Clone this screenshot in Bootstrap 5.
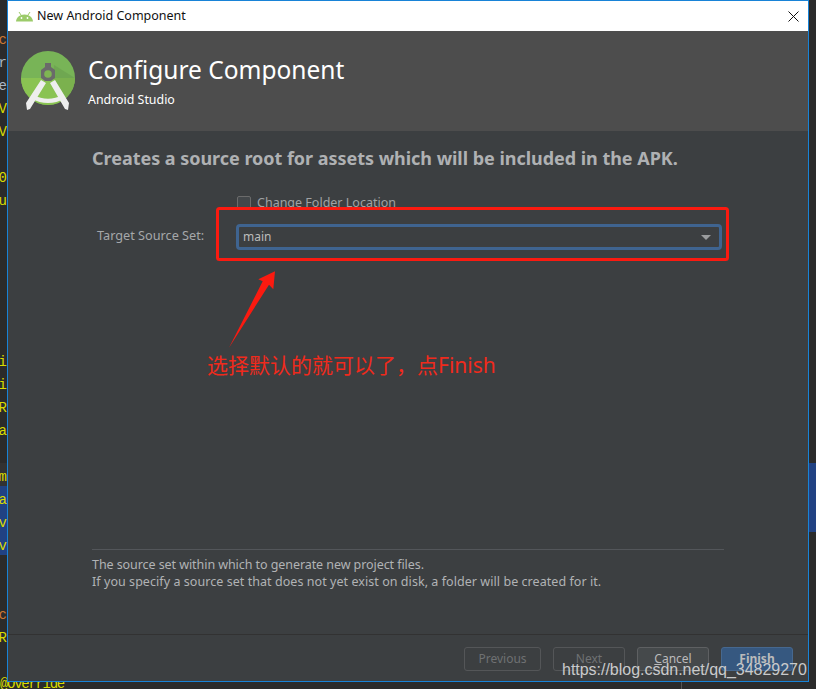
<!DOCTYPE html>
<html lang="en">
<head>
<meta charset="utf-8">
<title>New Android Component</title>
<link href="https://cdn.jsdelivr.net/npm/bootstrap@5.3.0/dist/css/bootstrap.min.css" rel="stylesheet">
<style>
html,body{margin:0;height:689px;overflow:hidden;background:#2b2b2b;font-family:"Noto Sans","Open Sans",sans-serif}
.stage{position:relative;width:816px;height:689px;overflow:hidden}
.code-gutter{position:absolute;left:0;top:26px;width:7px;overflow:hidden;font:14px/29px "Liberation Mono",monospace;color:#d8dc00}
.code-line{height:23px;overflow:hidden;white-space:pre;text-align:right;direction:rtl}
.code-line.kw{color:#cc7832}
.code-line.pl{color:#a9b7c6}
.sel-band{background:#214283}
.cur-band{background:#323232}
.override{position:absolute;left:0;top:675px;font:14px/18px "Liberation Mono",monospace;letter-spacing:-1.3px;color:#d8dc00}
.right-band{position:absolute;left:809px;top:463px;width:7px;height:69px;background:#214283}
.tick{position:absolute;left:681px;top:682px;width:1px;height:7px;background:#555}
.win{position:absolute;left:7px;top:0;width:802px;height:682px;border:1px solid #1883d7;display:flex;flex-direction:column;background:#3c3f41}
.titlebar{height:30px;background:#fff;color:#111;font-size:12.5px;padding-left:8px;gap:4px;flex:none}
.close-x{margin-left:auto;margin-right:9px;display:block}
.hdr{height:100px;background:#4d4d4d;flex:none;padding:21px 0 0 13px;gap:13px;color:#fff}
.hdr-logo{flex:none;margin-top:-1px}
.hdr-title{font-size:24.5px;line-height:36px}
.hdr-sub{font-size:12.4px;line-height:18px;margin-top:3px}
.pane{flex:1;display:flex;flex-direction:column;padding:15px 84px 0 84px;color:#bbb;min-height:0}
.pane-h{font-size:18px;font-weight:700;line-height:25px;color:#afb1b3;white-space:nowrap;letter-spacing:-.03px}
.cb-row{margin:24px 0 0 145px;height:16px;gap:6px;font-size:12.5px;color:#a0a2a4}
.cb-box{width:14px;height:14px;border:1px solid #6b6b6b;border-radius:2px;background:#43474a;flex:none}
.tgt-row{margin-top:13px;height:26px;font-size:12.7px}
.tgt-lab{width:144px;padding-left:5px;flex:none;color:#a6a8aa;margin-top:-3px}
.combo{width:486px;height:26px;flex:none;border:3px solid #3f6490;border-radius:4px;background:#3c3f41;color:#bbb;padding:0 5px 0 4px;font-size:12px}
.caret{margin-left:auto;margin-right:3px;width:0;height:0;border-left:5px solid transparent;border-right:5px solid transparent;border-top:5px solid #9a9c9e}
.spacer{flex:1}
.hint{border-top:1px solid #53565a;padding-top:6px;font-size:12.5px;line-height:17px;color:#b1b3b5;height:85px;flex:none;white-space:nowrap}
.hint-a{letter-spacing:-.07px}
.hint-b{letter-spacing:.055px}
.foot{height:47px;flex:none;border-top:1px solid #323232;padding:12px 15px 0 0;justify-content:flex-end;gap:12px}
.wbtn{height:24px;padding:0;font-size:12px;line-height:22px;border-radius:3px;background:transparent;border:1px solid #545658;color:#6f7173;width:72px;text-align:center}
.wbtn.w-prev{width:77px}
.wbtn.w-can{background:#45494b;border-color:#5e6062;color:#bbb}
.wbtn.w-fin{background:#365880;border-color:#46688f;color:#bbb;font-weight:700}
.wbtn:disabled{color:#6f7173;border-color:#545658;opacity:1}
.ann{position:absolute;left:0;top:0;pointer-events:none}
.ann-text{position:absolute;left:207px;top:350px;font:21px/30px "Noto Sans","Noto Sans CJK SC",sans-serif;color:#f02a1c;white-space:nowrap}
.wm{position:absolute;left:562px;top:661px;font:16px/18px "Liberation Sans",sans-serif;letter-spacing:-.02px;color:#c9cacb;white-space:nowrap}
</style>
</head>
<body>
<div class="stage">
  <div class="code-gutter">
    <div class="code-line kw">c</div><div class="code-line pl">r</div><div class="code-line pl">e</div><div class="code-line">V</div><div class="code-line">V</div><div class="code-line"></div><div class="code-line">0</div><div class="code-line">u</div>
    <div class="code-line"></div><div class="code-line"></div><div class="code-line"></div><div class="code-line"></div><div class="code-line"></div><div class="code-line"></div>
    <div class="code-line">i</div><div class="code-line">i</div><div class="code-line">R</div><div class="code-line">a</div><div class="code-line"></div>
    <div class="code-line cur-band">m</div><div class="code-line sel-band">a</div><div class="code-line sel-band">v</div><div class="code-line sel-band">v</div>
    <div class="code-line"></div><div class="code-line"></div>
    <div class="code-line kw">c</div><div class="code-line">R</div>
  </div>
  <div class="override">@Override</div>
  <div class="right-band"></div>
  <div class="tick"></div>

  <div class="win">
    <div class="titlebar d-flex align-items-center">
      <svg width="17" height="11" viewBox="0 0 17 11"><path d="M0 10.500C.4 6.500 3.500 3.600 8.500 3.600s8.100 2.900 8.500 6.900z" fill="#9ccb6a"/><path d="M3 1l2 3M14 1l-2 3" stroke="#9ccb6a" stroke-width="1"/><circle cx="5.500" cy="7" r=".9" fill="#fff"/><circle cx="11.500" cy="7" r=".9" fill="#fff"/></svg>
      <span>New Android Component</span>
      <svg class="close-x" width="11" height="11" viewBox="0 0 11 11"><path d="M.5.500l10 10M10.500.500l-10 10" stroke="#111" stroke-width="1"/></svg>
    </div>
    <div class="hdr d-flex">
      <svg width="54" height="60" viewBox="0 0 54 60" class="hdr-logo">
        <circle cx="27" cy="27" r="27" fill="#78b457"/>
        <path d="M0 27a27 27 0 0 0 54 0z" fill="#8ac352"/>
        <path d="M33 14L54 27a27 27 0 0 1-9 20L32 26z" fill="#5f8f48" opacity=".35"/>
        <path d="M24 12h6v4l4 3v8l-4 3h-6l-4-3v-8l4-3z" fill="#6a6a6a"/>
        <circle cx="27" cy="23" r="3.800" fill="#7fb552"/>
        <path d="M20 29l5 3L9 58l-3 1-1-7zM29 32l5-3 14 23-1 7-3-1z" fill="#eee"/>
        <path d="M13 44C21 49 33 49 41 44l2 3.500c-9 6-23 6-32 0z" fill="#eee"/>
      </svg>
      <div>
        <div class="hdr-title">Configure Component</div>
        <div class="hdr-sub">Android Studio</div>
      </div>
    </div>
    <div class="pane">
      <div class="pane-h">Creates a source root for assets which will be included in the APK.</div>
      <div class="cb-row d-flex align-items-center"><span class="cb-box"></span><span>Change Folder Location</span></div>
      <div class="tgt-row d-flex align-items-center">
        <span class="tgt-lab">Target Source Set:</span>
        <div class="combo d-flex align-items-center"><span>main</span><span class="caret"></span></div>
      </div>
      <div class="spacer"></div>
      <div class="hint"><span class="hint-a">The source set within which to generate new project files.</span><br><span class="hint-b">If you specify a source set that does not yet exist on disk, a folder will be created for it.</span></div>
    </div>
    <div class="foot d-flex">
      <button type="button" class="btn wbtn w-prev" disabled>Previous</button>
      <button type="button" class="btn wbtn" disabled>Next</button>
      <button type="button" class="btn wbtn w-can"><u>C</u>ancel</button>
      <button type="button" class="btn wbtn w-fin">Finish</button>
    </div>
  </div>

  <svg class="ann" width="816" height="689" viewBox="0 0 816 689">
    <rect x="217.500" y="208.500" width="510" height="51" rx="2" fill="none" stroke="#fb1a10" stroke-width="3"/>
    <path d="M229 347.700L262.700 281.300L258.300 279.300L275 271.300L273.300 289.300L269 284.700z" fill="#fb1a10"/>
  </svg>
  <div class="ann-text">选择默认的就可以了，点Finish</div>
  <div class="wm">https://blog.csdn.net/qq_34829270</div>
</div>
<script src="https://cdn.jsdelivr.net/npm/bootstrap@5.3.0/dist/js/bootstrap.bundle.min.js"></script>
</body>
</html>
